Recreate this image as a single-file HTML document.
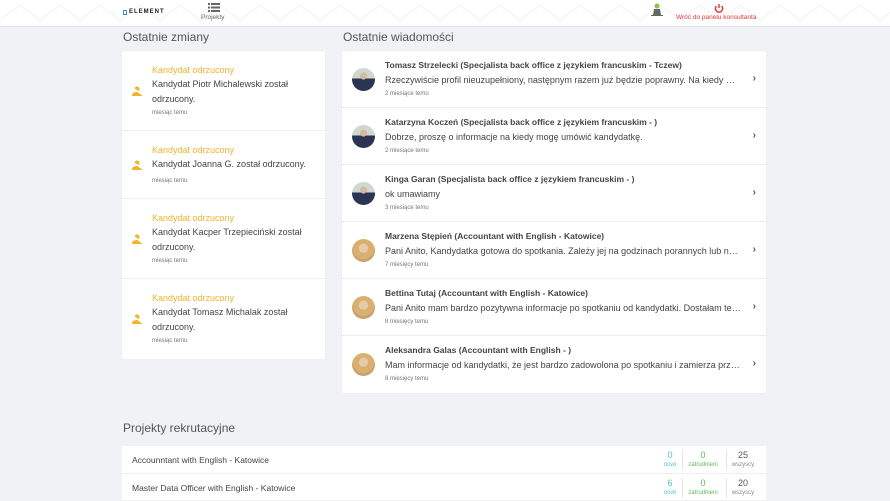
<!DOCTYPE html><html><head><meta charset="utf-8"><style>
*{box-sizing:border-box;margin:0;padding:0}
body{width:890px;height:500px;overflow:hidden;background:#f1f2f6;font-family:"Liberation Sans",sans-serif;color:#444;position:relative}
.hdr{position:absolute;left:0;top:0;width:890px;height:27px;background:#fff;border-bottom:1px solid #e6e7eb}
.abs{position:absolute}
h2{position:absolute;font-weight:normal;font-size:12px;color:#555}
.card{position:absolute;background:#fff;border-radius:2px;box-shadow:0 0 1px rgba(0,0,0,.08)}
.lr{position:absolute;left:0;width:203px;border-bottom:1px solid #eee}
.lr .t{position:absolute;left:30px;font-size:9px;color:#f0b429}
.lr .m{position:absolute;left:30px;font-size:9px;line-height:15px;color:#444;width:165px}
.lr .d{position:absolute;left:30px;font-size:6px;color:#777}
.lr .ic{position:absolute;left:9px;width:12px;height:10px}
.rr{position:absolute;left:0;width:424px;height:57px;border-bottom:1px solid #eee}
.av{position:absolute;left:10px;top:17px;width:23px;height:23px;border-radius:50%;overflow:hidden}
.rr .n{position:absolute;left:43px;top:9px;font-size:8.5px;font-weight:bold;color:#444;white-space:nowrap}
.rr .m{position:absolute;left:43px;top:24px;font-size:9px;color:#444;width:357px;white-space:nowrap;overflow:hidden;text-overflow:ellipsis}
.rr .d{position:absolute;left:43px;top:40px;font-size:6px;color:#777}
.rr .ch{position:absolute;right:10px;top:22px;font-size:10px;font-weight:bold;color:#555}
.pr{position:absolute;left:122px;width:644px;height:27px;background:#fff;border-bottom:1px solid #eee}
.pr .n{position:absolute;left:10px;top:9px;font-size:8.5px;color:#444}
.st{position:absolute;top:4px;text-align:center;font-size:9px;line-height:10px}
.st small{display:block;font-size:6px}
.sep{position:absolute;top:4px;width:1px;height:20px;background:#e6e6e6}
</style></head><body>
<div class="hdr">
<svg class="abs" style="left:0;top:0" width="890" height="27"><path d="M0 20 L20 5 L40 20 L60 5 L80 20 L100 5 L120 20 L140 5 L160 20 L180 5 L200 20 L220 5 L240 20 L260 5 L280 20 L300 5 L320 20 L340 5 L360 20 L380 5 L400 20 L420 5 L440 20 L460 5 L480 20 L500 5 L520 20 L540 5 L560 20 L580 5 L600 20 L620 5 L640 20 L660 5 L680 20 L700 5 L720 20 L740 5 L760 20 L780 5 L800 20 L820 5 L840 20 L860 5 L880 20 L900 5" stroke="#f8f8f8" stroke-width="2" fill="none"/></svg>
<div class="abs" style="left:123px;top:10px;width:4px;height:5px;border:1px solid #3a8fd6"></div>
<div class="abs" style="left:129px;top:9px;font-size:6px;font-weight:bold;letter-spacing:1px;color:#222">ELEMENT</div>
<svg class="abs" style="left:208px;top:2px" width="12" height="10"><g fill="#666"><rect x="0" y="1" width="2" height="2"/><rect x="3" y="1" width="9" height="2"/><rect x="0" y="4.5" width="2" height="2"/><rect x="3" y="4.5" width="9" height="2"/><rect x="0" y="8" width="2" height="2"/><rect x="3" y="8" width="9" height="2"/></g></svg>
<div class="abs" style="left:201px;top:14px;font-size:6.5px;color:#666">Projekty</div>
<svg class="abs" style="left:651px;top:3px" width="12" height="15"><circle cx="6" cy="3" r="2.5" fill="#8bc34a"/><path d="M3 6h6l1 6h2v1H0v-1h2z" fill="#666"/></svg>
<svg class="abs" style="left:714px;top:3px" width="10" height="10"><path d="M2.5 3 A3.6 3.6 0 1 0 7.5 3" stroke="#e53935" stroke-width="1.5" fill="none"/><path d="M5 1V5" stroke="#e53935" stroke-width="1.5"/></svg>
<div class="abs" style="left:676px;top:14px;font-size:6.5px;color:#e53935">Wróć do panelu konsultanta</div>
</div>
<h2 style="left:123px;top:30px">Ostatnie zmiany</h2>
<h2 style="left:343px;top:30px">Ostatnie wiadomości</h2>
<div class="card" style="left:122px;top:51px;width:203px;height:308px">
<div class="lr" style="top:0;height:80px"><div class="t" style="top:14px">Kandydat odrzucony</div><div class="m" style="top:26px">Kandydat Piotr Michalewski został odrzucony.</div><div class="d" style="top:59px">miesiąc temu</div><svg class="ic" style="top:35px" viewBox="0 0 12 10"><circle cx="6" cy="3" r="2.5" fill="#f0b429"/><path d="M1 10c0-3 2-4 5-4s5 1 5 4z" fill="#f0b429"/><path d="M0 1L12 9" stroke="#fff" stroke-width="1.5"/></svg></div>
<div class="lr" style="top:80px;height:68px"><div class="t" style="top:14px">Kandydat odrzucony</div><div class="m" style="top:26px">Kandydat Joanna G. został odrzucony.</div><div class="d" style="top:47px">miesiąc temu</div><svg class="ic" style="top:29px" viewBox="0 0 12 10"><circle cx="6" cy="3" r="2.5" fill="#f0b429"/><path d="M1 10c0-3 2-4 5-4s5 1 5 4z" fill="#f0b429"/><path d="M0 1L12 9" stroke="#fff" stroke-width="1.5"/></svg></div>
<div class="lr" style="top:148px;height:80px"><div class="t" style="top:14px">Kandydat odrzucony</div><div class="m" style="top:26px">Kandydat Kacper Trzepieciński został odrzucony.</div><div class="d" style="top:59px">miesiąc temu</div><svg class="ic" style="top:35px" viewBox="0 0 12 10"><circle cx="6" cy="3" r="2.5" fill="#f0b429"/><path d="M1 10c0-3 2-4 5-4s5 1 5 4z" fill="#f0b429"/><path d="M0 1L12 9" stroke="#fff" stroke-width="1.5"/></svg></div>
<div class="lr" style="top:228px;height:80px;border:0"><div class="t" style="top:14px">Kandydat odrzucony</div><div class="m" style="top:26px">Kandydat Tomasz Michalak został odrzucony.</div><div class="d" style="top:59px">miesiąc temu</div><svg class="ic" style="top:35px" viewBox="0 0 12 10"><circle cx="6" cy="3" r="2.5" fill="#f0b429"/><path d="M1 10c0-3 2-4 5-4s5 1 5 4z" fill="#f0b429"/><path d="M0 1L12 9" stroke="#fff" stroke-width="1.5"/></svg></div>
</div>
<div class="card" style="left:342px;top:51px;width:424px;height:342px">
<div class="rr" style="top:0"><div class="av" style="background:radial-gradient(circle at 50% 35%,#d9b8a0 0 18%,transparent 19%),linear-gradient(#cfd8cf 0 45%,#2a3553 46%)"></div><div class="n">Tomasz Strzelecki (Specjalista back office z językiem francuskim - Tczew)</div><div class="m">Rzeczywiście profil nieuzupełniony, następnym razem już będzie poprawny. Na kiedy może Pani umówić</div><div class="d">2 miesiące temu</div><div class="ch">›</div></div>
<div class="rr" style="top:57px"><div class="av" style="background:radial-gradient(circle at 50% 35%,#d9b8a0 0 18%,transparent 19%),linear-gradient(#cfd8cf 0 45%,#2a3553 46%)"></div><div class="n">Katarzyna Koczeń (Specjalista back office z językiem francuskim - )</div><div class="m">Dobrze, proszę o informacje na kiedy mogę umówić kandydatkę.</div><div class="d">2 miesiące temu</div><div class="ch">›</div></div>
<div class="rr" style="top:114px"><div class="av" style="background:radial-gradient(circle at 50% 35%,#d9b8a0 0 18%,transparent 19%),linear-gradient(#cfd8cf 0 45%,#2a3553 46%)"></div><div class="n">Kinga Garan (Specjalista back office z językiem francuskim - )</div><div class="m">ok umawiamy</div><div class="d">3 miesiące temu</div><div class="ch">›</div></div>
<div class="rr" style="top:171px"><div class="av" style="background:radial-gradient(circle at 50% 40%,#e8c9a8 0 25%,#d8b070 26% 60%,#c9a070 61%)"></div><div class="n">Marzena Stępień (Accountant with English - Katowice)</div><div class="m">Pani Anito, Kandydatka gotowa do spotkania. Zależy jej na godzinach porannych lub na popołudniu</div><div class="d">7 miesięcy temu</div><div class="ch">›</div></div>
<div class="rr" style="top:228px"><div class="av" style="background:radial-gradient(circle at 50% 40%,#e8c9a8 0 25%,#d8b070 26% 60%,#c9a070 61%)"></div><div class="n">Bettina Tutaj (Accountant with English - Katowice)</div><div class="m">Pani Anito mam bardzo pozytywna informacje po spotkaniu od kandydatki. Dostałam telefon i wiadomość</div><div class="d">8 miesięcy temu</div><div class="ch">›</div></div>
<div class="rr" style="top:285px;border:0"><div class="av" style="background:radial-gradient(circle at 50% 40%,#e8c9a8 0 25%,#d8b070 26% 60%,#c9a070 61%)"></div><div class="n">Aleksandra Galas (Accountant with English - )</div><div class="m">Mam informacje od kandydatki, że jest bardzo zadowolona po spotkaniu i zamierza przyjąć ofertę</div><div class="d">8 miesięcy temu</div><div class="ch">›</div></div>
</div>
<h2 style="left:123px;top:421px">Projekty rekrutacyjne</h2>
<div class="pr" style="top:446px;height:28px"><div class="n">Accounntant with English - Katowice</div>
<div class="st" style="left:540px;width:16px;color:#5bc0de">0<small>nowi</small></div><div class="sep" style="left:560px"></div>
<div class="st" style="left:561px;width:40px;color:#5cb85c">0<small>zatrudnieni</small></div><div class="sep" style="left:604px"></div>
<div class="st" style="left:606px;width:30px;color:#555">25<small style="color:#888">wszyscy</small></div></div>
<div class="pr" style="top:474px"><div class="n">Master Data Officer with English - Katowice</div>
<div class="st" style="left:540px;width:16px;color:#5bc0de">6<small>nowi</small></div><div class="sep" style="left:560px"></div>
<div class="st" style="left:561px;width:40px;color:#5cb85c">0<small>zatrudnieni</small></div><div class="sep" style="left:604px"></div>
<div class="st" style="left:606px;width:30px;color:#555">20<small style="color:#888">wszyscy</small></div></div>
</body></html>
